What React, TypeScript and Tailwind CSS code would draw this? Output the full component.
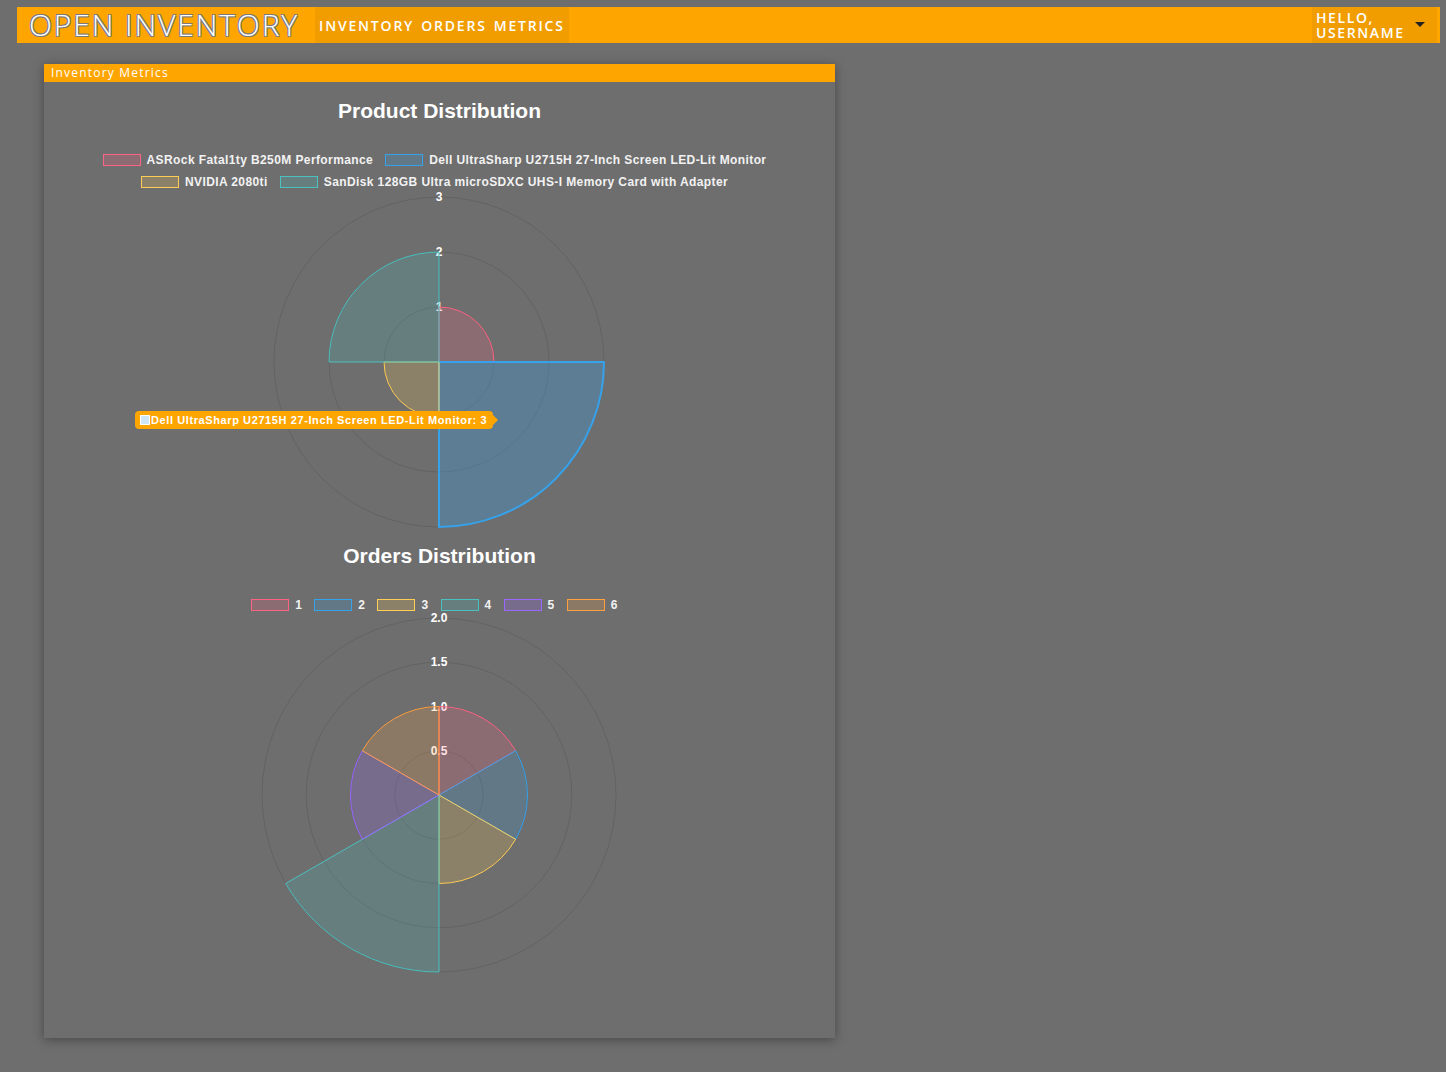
import React from "react";

type Seg = {
    label: string;
    value: number;
    rgb: string;
    hover?: boolean;
};

const RED = "255,99,132";
const BLUE = "54,162,235";
const YELLOW = "255,205,86";
const TEAL = "75,192,192";
const PURPLE = "153,102,255";
const ORANGE = "255,159,64";

const products: Seg[] = [
    { label: "ASRock Fatal1ty B250M Performance", value: 1, rgb: RED },
    { label: "Dell UltraSharp U2715H 27-Inch Screen LED-Lit Monitor", value: 3, rgb: BLUE, hover: true },
    { label: "NVIDIA 2080ti", value: 1, rgb: YELLOW },
    { label: "SanDisk 128GB Ultra microSDXC UHS-I Memory Card with Adapter", value: 2, rgb: TEAL },
];

const orders: Seg[] = [
    { label: "1", value: 1, rgb: RED },
    { label: "2", value: 1, rgb: BLUE },
    { label: "3", value: 1, rgb: YELLOW },
    { label: "4", value: 2, rgb: TEAL },
    { label: "5", value: 1, rgb: PURPLE },
    { label: "6", value: 1, rgb: ORANGE },
];

const sector = (cx: number, cy: number, r: number, a0: number, a1: number) => {
    const x0 = cx + r * Math.cos(a0);
    const y0 = cy + r * Math.sin(a0);
    const x1 = cx + r * Math.cos(a1);
    const y1 = cy + r * Math.sin(a1);
    const large = a1 - a0 > Math.PI ? 1 : 0;
    return `M ${cx} ${cy} L ${x0} ${y0} A ${r} ${r} 0 ${large} 1 ${x1} ${y1} Z`;
};

const Legend = ({ rows }: { rows: Seg[][] }) => (
    <div className="flex flex-col items-center pr-[10px]">
        {rows.map((row, i) => (
            <div key={i} className="flex h-[22px] items-center gap-[12px]">
                {row.map((s) => (
                    <div key={s.label} className="flex items-center gap-[6px]">
                        <span
                            className="block h-[12px] w-[38px] border-[1.5px]"
                            style={{ borderColor: `rgb(${s.rgb})`, background: `rgba(${s.rgb},0.2)` }}
                        />
                        <span className="text-[12px] font-bold tracking-[0.4px] text-[#f2f2f2]">{s.label}</span>
                    </div>
                ))}
            </div>
        ))}
    </div>
);

const Polar = ({
    data,
    max,
    ticks,
    radius,
    height,
    cy,
}: {
    data: Seg[];
    max: number;
    ticks: string[];
    radius: number;
    height: number;
    cy: number;
}) => {
    const cx = 395;
    const step = (Math.PI * 2) / data.length;
    return (
        <svg width={791} height={height} className="block">
            {ticks.map((t, i) => {
                const r = (radius * (i + 1)) / ticks.length;
                return <circle key={t} cx={cx} cy={cy} r={r} fill="none" stroke="rgba(0,0,0,0.1)" strokeWidth={1} />;
            })}
            {ticks.map((t, i) => {
                const r = (radius * (i + 1)) / ticks.length;
                return (
                    <text
                        key={"l" + t}
                        x={cx}
                        y={cy - r + 4}
                        textAnchor="middle"
                        fontSize={12}
                        fontWeight="bold"
                        fill="#ffffff"
                        fontFamily='"Liberation Sans", Arial, sans-serif'
                    >
                        {t}
                    </text>
                );
            })}
            {data.map((s, i) => {
                const a0 = -Math.PI / 2 + i * step;
                const r = (radius * s.value) / max;
                return (
                    <path
                        key={s.label}
                        d={sector(cx, cy, r, a0, a0 + step)}
                        fill={`rgba(${s.rgb},${s.hover ? 0.3 : 0.2})`}
                        stroke={`rgb(${s.rgb})`}
                        strokeWidth={s.hover ? 2 : 1}
                        strokeLinejoin="round"
                    />
                );
            })}
        </svg>
    );
};

const App = () => {
    return (
        <div className="min-h-screen bg-[#6e6e6e] pt-[7px] font-['Open_Sans',sans-serif]">
            <nav className="ml-[17px] mr-[6px] flex h-[36px] items-stretch bg-[#ffa500]">
                <div className="flex items-center pl-[12px] pr-[16px] text-[30px] font-light leading-none tracking-[1.9px] text-white [text-shadow:-1px_-1px_0_#7a7a7a,1px_-1px_0_#7a7a7a,-1px_1px_0_#7a7a7a,1px_1px_0_#7a7a7a]">
                    OPEN INVENTORY
                </div>
                <div className="flex items-center gap-[7px] bg-[#f19d00] px-[4px] text-[14px] font-semibold tracking-[1.8px] text-white">
                    <span>INVENTORY</span>
                    <span>ORDERS</span>
                    <span>METRICS</span>
                </div>
                <div className="ml-auto mr-[3px] flex w-[125px] items-center bg-[#f19d00] pl-[4px] pr-[12px]">
                    <div className="flex flex-col text-[14px] font-semibold leading-[15px] tracking-[1.6px] text-white">
                        <span>HELLO,</span>
                        <span>USERNAME</span>
                    </div>
                    <svg width="10" height="6" viewBox="0 0 10 6" className="ml-auto">
                        <path d="M0 0 L10 0 L5 5 Z" fill="#222" />
                    </svg>
                </div>
            </nav>

            <div className="ml-[44px] mt-[21px] w-[791px] shadow-[0_2px_10px_rgba(0,0,0,0.35)]">
                <div className="flex h-[18px] items-center bg-[#ffa500] pl-[7px] text-[12px] tracking-[1.2px] text-white">
                    Inventory Metrics
                </div>
                <div className="h-[956px] bg-[#6e6e6e] font-['Liberation_Sans',Arial,sans-serif]">
                    <h2 className="pt-[17px] text-center text-[21px] font-bold leading-[24px] text-white">
                        Product Distribution
                    </h2>
                    <div className="mt-[26px] mb-[-8px]">
                        <Legend rows={[products.slice(0, 2), products.slice(2)]} />
                    </div>
                    <div className="relative">
                        <Polar data={products} max={3} ticks={["1", "2", "3"]} radius={165} height={348} cy={177} />
                        <div className="absolute left-[91px] top-[226px] flex h-[18px] items-center rounded-[4px] bg-[#ffa500] pl-[5px] pr-[6px]">
                            <span className="mr-[1px] block h-[10px] w-[10px] border border-white bg-[#cfe6f7]" />
                            <span className="text-[11px] font-bold tracking-[0.6px] text-white">
                                Dell UltraSharp U2715H 27-Inch Screen LED-Lit Monitor: 3
                            </span>
                            <span className="absolute right-[-5px] top-[4px] h-0 w-0 border-y-[5px] border-l-[5px] border-y-transparent border-l-[#ffa500]" />
                        </div>
                    </div>

                    <h2 className="mt-[11px] text-center text-[21px] font-bold leading-[24px] text-white">
                        Orders Distribution
                    </h2>
                    <div className="mt-[26px] mb-[-8px]">
                        <Legend rows={[orders]} />
                    </div>
                    <Polar data={orders} max={2} ticks={["0.5", "1.0", "1.5", "2.0"]} radius={177} height={378} cy={187} />
                </div>
            </div>
        </div>
    );
};

export default App;
